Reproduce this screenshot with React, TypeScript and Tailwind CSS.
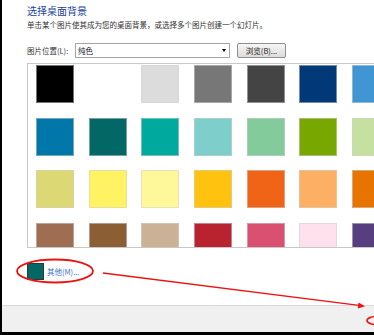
import React from "react";

const rows: string[][] = [
  ["#000000", "#ffffff", "#dcdcdc", "#777777", "#444444", "#003878", "#4096d2"],
  ["#0077a8", "#036766", "#00a99d", "#7ecfcb", "#84cb9c", "#78a800", "#c5e0a0"],
  ["#dcd874", "#fff263", "#fff89a", "#ffc20e", "#f06418", "#fdb064", "#e87400"],
  ["#9f6d51", "#8b5e34", "#cbb296", "#b8232f", "#d95070", "#ffe0ec", "#573e7f"],
];

export default function App() {
  const font = { fontFamily: '"Noto Sans CJK SC", "Noto Sans", sans-serif' };
  return (
    <div
      className="relative w-[374px] h-[335px] overflow-hidden bg-white flex flex-col"
      style={font}
    >
      <div className="flex flex-1 min-h-0">
        <div className="w-[2px] bg-black shrink-0" />
        <div className="flex-1 flex flex-col min-w-0">
          <div className="flex flex-col pl-[25px]">
            <div className="pt-[5px] text-[10px] leading-[12px] text-[#1e3f9a]">选择桌面背景</div>
            <div className="mt-[3px] text-[7.5px] leading-[10px] text-[#333]">
              单击某个图片使其成为您的桌面背景，或选择多个图片创建一个幻灯片。
            </div>
            <div className="mt-[13px] flex items-center h-[15px]">
              <div className="w-[48px] text-[7.5px] leading-[10px] text-[#333]">图片位置(L):</div>
              <div className="w-[155px] h-[15px] border border-[#a5a5a5] bg-white flex items-center justify-between pl-[2px] pr-[3px]">
                <span className="text-[7.5px] leading-[10px] text-[#222]">纯色</span>
                <span className="w-0 h-0 border-l-[2.5px] border-r-[2.5px] border-t-[3px] border-l-transparent border-r-transparent border-t-black" />
              </div>
              <div className="ml-[7px] w-[49px] h-[15px] border border-[#8e8e8e] rounded-[2px] bg-gradient-to-b from-[#f6f6f6] to-[#dcdcdc] flex items-center justify-center">
                <span className="text-[7.5px] leading-[10px] text-[#222]">浏览(B)...</span>
              </div>
            </div>
            <div className="mt-[5px] h-[185px] w-[360px] border border-[#c8c8c8] overflow-hidden">
              <div className="pt-[1px] pl-[8px] flex flex-col gap-[14.66px]">
                {rows.map((r, i) => (
                  <div key={i} className="flex gap-[14.66px]">
                    {r.map((c, j) => (
                      <div
                        key={j}
                        className="w-[38px] h-[38px] shrink-0 border border-[rgba(210,210,210,0.55)]"
                        style={{ backgroundColor: c, borderColor: c === "#ffffff" ? "#ffffff" : undefined }}
                      />
                    ))}
                  </div>
                ))}
              </div>
            </div>
            <div className="mt-[15px] flex items-center">
              <div className="w-[17px] h-[17px] bg-[#036766] border border-[#2a3a3a]" />
              <span className="ml-[3px] text-[7.5px] leading-[10px] text-[#3a6fd0]">其他(M)...</span>
            </div>
          </div>
          <div className="flex-1" />
          <div className="h-[27px] border-t border-[#dadada] bg-[#f0f0f0]" />
        </div>
      </div>
      <div className="h-[3px] bg-black shrink-0" />

      <svg className="absolute inset-0 pointer-events-none" width="374" height="335" viewBox="0 0 374 335">
        <ellipse cx="55" cy="271" rx="38" ry="11.5" fill="none" stroke="#ee1111" strokeWidth="1.8" />
        <line x1="103" y1="273" x2="359" y2="305.4" stroke="#ee1111" strokeWidth="1.3" />
        <polygon points="365,306.2 358.5,302.6 357.8,308.4" fill="#ee1111" />
        <ellipse cx="380" cy="320.5" rx="13" ry="4.5" fill="none" stroke="#ee1111" strokeWidth="1.6" />
      </svg>
    </div>
  );
}
